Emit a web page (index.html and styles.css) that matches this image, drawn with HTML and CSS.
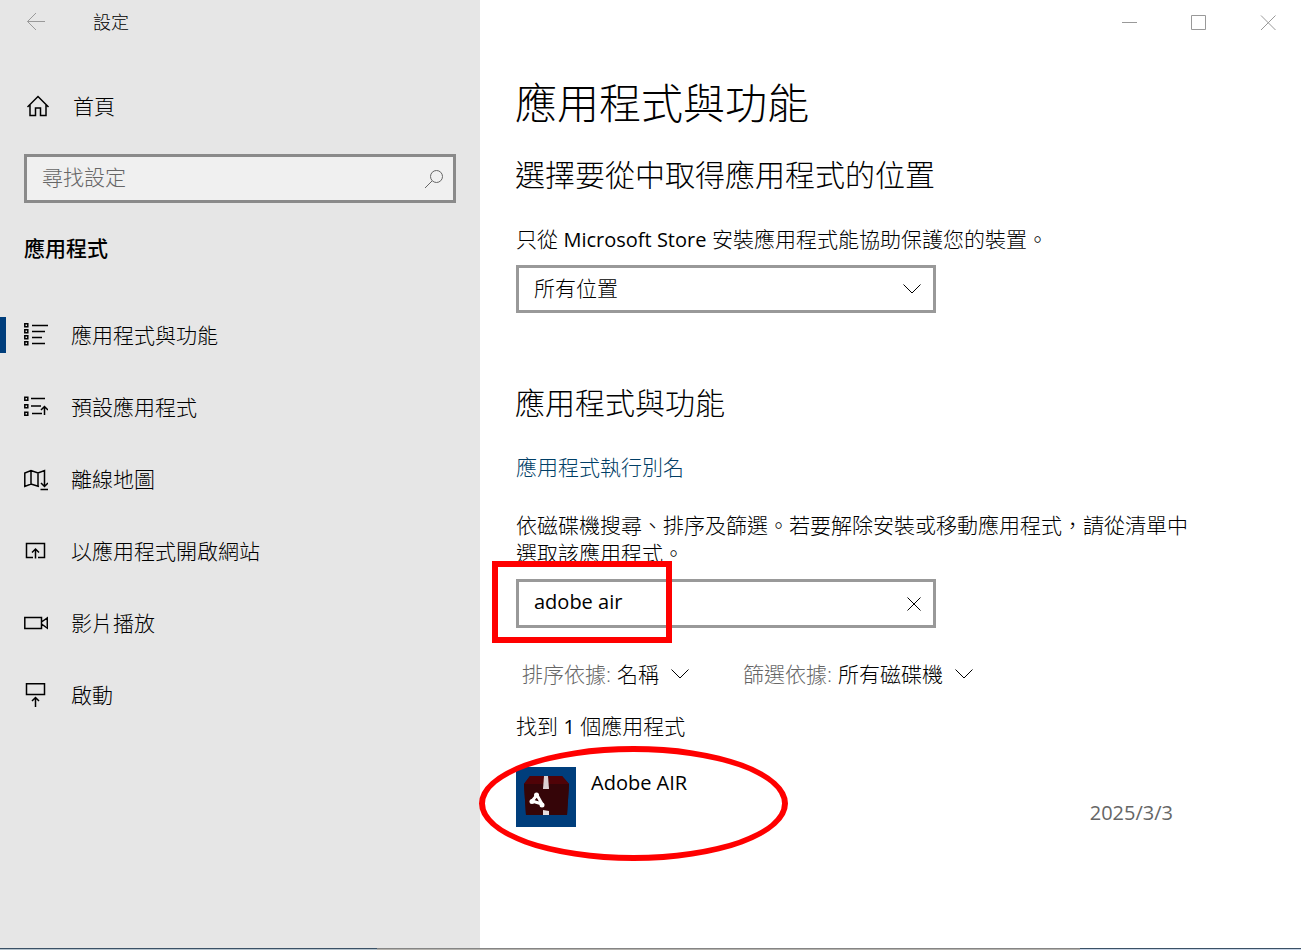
FILE: index.html
```html
<!DOCTYPE html>
<html lang="zh-Hant-TW">
<head>
<meta charset="utf-8">
<meta name="viewport" content="width=device-width, initial-scale=1">
<title>設定</title>
<link rel="stylesheet" href="styles.css">
</head>
<body>
<div class="window">
  <aside class="sidebar">
    <header class="titlebar">
      <button class="back" type="button" aria-label="返回">
        <svg width="20" height="20" viewBox="0 0 20 20"><path d="M19 9.500H1.500M10 1L1.500 9.500L10 18"/></svg>
      </button>
      <span class="titlebar-text">設定</span>
    </header>
    <a class="home" href="#">
      <svg class="icon" width="24" height="24" viewBox="0 0 24 24"><path d="M1.500 13L12 2.500L22.500 13M4 10.500V21.500H9.500V14H14.500V21.500H20V10.500"/></svg>
      <span>首頁</span>
    </a>
    <div class="field search">
      <input class="field-control" type="text" placeholder="尋找設定" aria-label="尋找設定">
      <svg class="search-icon" width="20" height="20" viewBox="0 0 20 20"><circle cx="12.500" cy="7.500" r="6"/><path d="M8 12L1 19"/></svg>
    </div>
    <h2 class="group">應用程式</h2>
    <nav class="nav">
      <a class="nav-item active" href="#">
        <svg class="icon" width="24" height="24" viewBox="0 0 24 24"><path d="M8 2.500H24M8 8.500H21M8 14.500H18M8 20.500H21"/><path d="M.8.800h3v3h-3zM.8 6.800h3v3h-3zM.8 12.800h3v3h-3zM.8 18.800h3v3h-3z"/></svg>
        <span>應用程式與功能</span>
      </a>
      <a class="nav-item" href="#">
        <svg class="icon" width="24" height="24" viewBox="0 0 24 24"><path d="M7 3.500H21M7 11H17M8 18.500H18M20.500 20V11.500M17 15L20.500 11.500L24 15"/><path d="M.8 2.300h3v3h-3zM.8 9.800h3v3h-3zM.8 17.300h3v3h-3z"/></svg>
        <span>預設應用程式</span>
      </a>
      <a class="nav-item" href="#">
        <svg class="icon" width="24" height="24" viewBox="0 0 24 24"><path d="M15 19.500L7 17L.8 19.500V6L7 3.500L14 6L20.500 3.500V19.500M7 3.500V17M14 6V19M17 16L20.500 19.500L24 16M16.500 22.500H24"/></svg>
        <span>離線地圖</span>
      </a>
      <a class="nav-item" href="#">
        <svg class="icon" width="24" height="24" viewBox="0 0 24 24"><path d="M9 18.500H2.500V4.500H20.500V18.500H14M11.500 19.500V10M8 13.500L11.500 10L15 13.500"/></svg>
        <span>以應用程式開啟網站</span>
      </a>
      <a class="nav-item" href="#">
        <svg class="icon" width="24" height="24" viewBox="0 0 24 24"><path d="M.8 6.500H17.500V17.500H.8zM17.500 11L23.300 7V17L17.500 13"/></svg>
        <span>影片播放</span>
      </a>
      <a class="nav-item" href="#">
        <svg class="icon" width="24" height="24" viewBox="0 0 24 24"><path d="M2.500.8H20.500V11.500H2.500zM11.500 24V14.500M8 18L11.500 14.500L15 18"/></svg>
        <span>啟動</span>
      </a>
    </nav>
  </aside>

  <main class="main">
    <div class="controls">
      <button type="button" aria-label="最小化"><svg width="16" height="16" viewBox="0 0 16 16"><path d="M0 8.500H15"/></svg></button>
      <button type="button" aria-label="最大化"><svg width="16" height="16" viewBox="0 0 16 16"><path d="M.5 1.500H14.500V15.500H.5z"/></svg></button>
      <button type="button" aria-label="關閉"><svg width="16" height="16" viewBox="0 0 16 16"><path d="M1 1.500L15.500 16M15.500 1.500L1 16"/></svg></button>
    </div>
    <div class="content">
      <h1>應用程式與功能</h1>
      <h2 class="section-title">選擇要從中取得應用程式的位置</h2>
      <label class="text" for="source">只從 <span class="latin">Microsoft Store</span> 安裝應用程式能協助保護您的裝置。</label>
      <div class="field source">
        <select class="field-control" id="source"><option>所有位置</option></select>
        <svg class="chevron" width="18" height="10" viewBox="0 0 18 10"><path d="M.5.500L9 9L17.500.500"/></svg>
      </div>

      <h2 class="section-title apps-title">應用程式與功能</h2>
      <a class="link" href="#">應用程式執行別名</a>
      <label class="text intro" for="filter">依磁碟機搜尋、排序及篩選。若要解除安裝或移動應用程式，請從清單中選取該應用程式。</label>
      <div class="field filter">
        <input class="field-control latin" id="filter" type="text" value="adobe air">
        <button class="clear" type="button" aria-label="清除"><svg width="14" height="14" viewBox="0 0 14 14"><path d="M.5.500L13.500 13.500M13.500.500L.5 13.500"/></svg></button>
        <span class="mark-box"></span>
      </div>
      <div class="sorting">
        <div class="sort">
          <label for="sort">排序依據:</label>
          <select id="sort"><option>名稱</option></select>
          <svg class="chevron" width="18" height="10" viewBox="0 0 18 10"><path d="M.5.500L9 9L17.500.500"/></svg>
        </div>
        <div class="sort">
          <label for="drive">篩選依據:</label>
          <select id="drive"><option>所有磁碟機</option></select>
          <svg class="chevron" width="18" height="10" viewBox="0 0 18 10"><path d="M.5.500L9 9L17.500.500"/></svg>
        </div>
      </div>
      <p class="text">找到 <span class="latin">1</span> 個應用程式</p>
      <div class="app">
        <svg class="app-icon" width="60" height="60" viewBox="0 0 60 60">
          <rect width="60" height="60" fill="#003e7c"/>
          <path d="M14 9H46L53 17L51 48H10L8 17z" fill="#3d0508"/>
          <path d="M14 9H46L53 17H8z" fill="#500307"/>
          <path d="M8 17H53L51 48H10z" fill="#350508"/>
          <path d="M28 9H32L33 22H27z" fill="#dcd0d2"/>
          <path d="M27 43L33 44V48H27z" fill="#e5dcdd"/>
          <path d="M21 28L26 37L16 34z" fill="none" stroke="#fff" stroke-width="3" stroke-linejoin="round"/>
          <g fill="#fff"><circle cx="20.500" cy="28" r="2.500"/><circle cx="16" cy="34.500" r="2.500"/><circle cx="26" cy="38" r="2.500"/></g>
        </svg>
        <span class="app-name latin">Adobe AIR</span>
        <time class="app-date latin" datetime="2025-03-03">2025/3/3</time>
        <span class="mark-oval"></span>
      </div>
    </div>
  </main>
</div>
<div class="edge"></div>
</body>
</html>
```
FILE: styles.css
```css
* { box-sizing: border-box; }

body {
  margin: 0;
  min-height: 100vh;
  display: flex;
  flex-direction: column;
  background: #fff;
  color: #000;
  font: 300 21px/28px "Open Sans", "Noto Sans CJK TC", sans-serif;
}

h1, h2, p { margin: 0; font-weight: 300; }
a { color: inherit; text-decoration: none; }
svg { display: block; flex: none; fill: none; stroke: currentColor; }
button { padding: 0; border: 0; background: none; color: inherit; }
input, select { font: inherit; color: inherit; }
select { appearance: none; border: 0; background: none; padding: 0; }

.latin { font-size: 20px; font-weight: 400; }

.window {
  flex: 1;
  display: grid;
  grid-template-columns: 480px 1fr;
}

/* Sidebar */
.sidebar { background: #e6e6e6; }

.titlebar {
  display: flex;
  align-items: center;
  gap: 47px;
  height: 44px;
  padding-left: 26px;
  font-size: 18px;
}
.back { color: #999; }

.home {
  display: flex;
  align-items: center;
  gap: 23px;
  height: 48px;
  margin-top: 38px;
  padding-left: 26px;
}
.icon { stroke-width: 1.500; }

.field {
  position: relative;
  display: flex;
  align-items: center;
  height: 49px;
  border: 3px solid #999;
}
.field-control {
  flex: 1;
  min-width: 0;
  height: 100%;
  padding: 0 15px 4px;
  border: 0;
  background: none;
  outline: 0;
}
.field-control::placeholder { color: #666; opacity: 1; }

.search {
  margin: 24px 24px 0;
  border-color: #8a8a8a;
  background: #f0f0f0;
}
.search-icon { margin-right: 9px; color: #666; }

.group {
  margin: 31px 24px 37px;
  font-size: 21px;
  font-weight: 500;
}

.nav-item {
  position: relative;
  display: flex;
  align-items: center;
  gap: 23px;
  height: 72px;
  padding-left: 24px;
}
.nav-item.active::before {
  content: "";
  position: absolute;
  left: 0;
  width: 6px;
  height: 36px;
  background: #003e7c;
}

/* Main pane */
.controls {
  display: flex;
  justify-content: flex-end;
  gap: 3px;
  height: 44px;
  color: #999;
}
.controls button {
  display: grid;
  place-items: center;
  width: 66px;
}

.content {
  max-width: 712px;
  padding: 31px 0 32px 35px;
}
.content > :not(h1, h2) { margin-left: 1px; }
h1 { font-size: 42px; line-height: 56px; }
.section-title {
  margin-top: 24px;
  font-size: 30px;
  line-height: 40px;
}
.text { display: block; }
.text .latin { line-height: 20px; }
.section-title + .text { margin-top: 30px; }

.source { width: 420px; height: 48px; margin-top: 12px; }
.source .field-control { padding-bottom: 2px; }
.source .chevron { position: absolute; right: 12px; pointer-events: none; }

.apps-title { margin-top: 70px; }
.link { display: block; margin-top: 30px; color: #003e66; }
.intro { margin-top: 30px; }

.filter { width: 420px; margin-top: 12px; }
.clear { margin-right: 12px; }

.sorting {
  display: flex;
  gap: 54px;
  margin: 32px 0 24px;
  padding-left: 6px;
}
.sort { display: flex; align-items: center; gap: 6px; }
.sort label { color: #666; }
.sort .chevron { margin-left: 6px; }

.app {
  position: relative;
  display: flex;
  gap: 15px;
  margin-top: 27px;
  padding-right: 19px;
}
.app-icon { stroke: none; }
.app-name { margin-top: 2px; }
.app-date { margin: 32px 0 0 auto; color: #666; }

/* Red annotations drawn over the page */
.mark-box {
  position: absolute;
  top: -21px;
  left: -27px;
  width: 180px;
  height: 82px;
  border: 6px solid #f00;
  pointer-events: none;
}
.mark-oval {
  position: absolute;
  top: -21px;
  left: -37px;
  width: 309px;
  height: 115px;
  border: 6px solid #f00;
  border-radius: 50%;
  pointer-events: none;
}

/* Strip of desktop visible under the window */
.edge {
  height: 2px;
  background:
    linear-gradient(90deg, #3b5166 0 29%, #858585 29% 83%, #3b5166 83%) top / 100% 1px no-repeat,
    linear-gradient(90deg, #b4c2cc 0 29%, #b5b3ae 29% 83%, #c5d3e6 83%) bottom / 100% 1px no-repeat;
}
```
